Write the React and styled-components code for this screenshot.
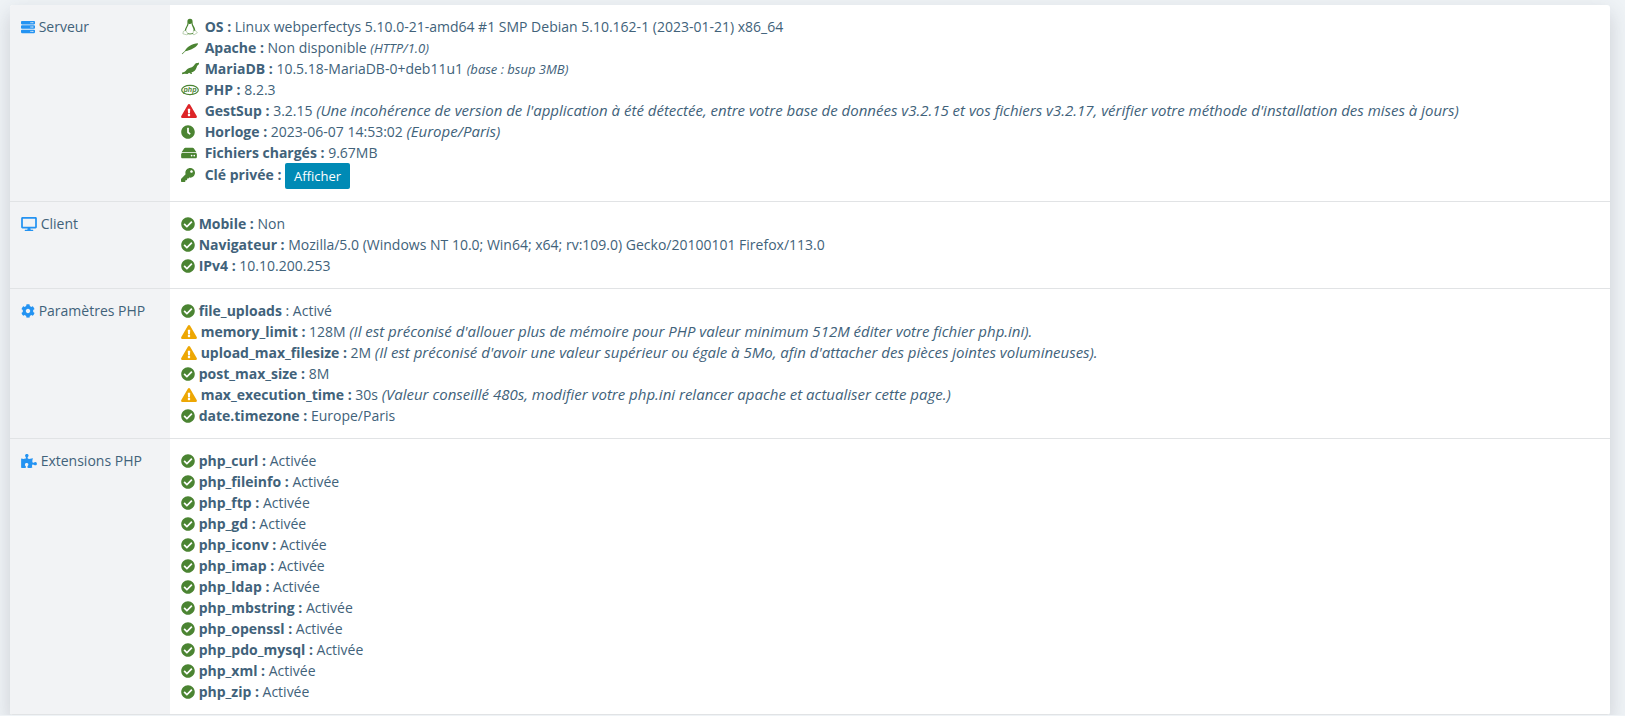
import React from 'react';
import styled, { createGlobalStyle } from 'styled-components';
import {
  FaServer,
  FaDesktop,
  FaCog,
  FaPuzzlePiece,
  FaCheckCircle,
  FaExclamationTriangle,
  FaClock,
  FaHdd,
  FaKey,
} from 'react-icons/fa';

const GlobalStyle = createGlobalStyle`
  body {
    margin: 0;
    background-color: #eff3f6;
    color: #41627a;
    font-family: 'Open Sans', 'Noto Sans', sans-serif;
    font-size: 14px;
    line-height: 21px;
  }
`;

const Page = styled.main`
  padding: 5px 15px 0 10px;
`;

const Card = styled.section`
  background-color: #fff;
  border-radius: 3px;
  overflow: hidden;
  box-shadow: 0 8px 20px rgba(60, 60, 80, 0.2);
`;

const InfoTable = styled.table`
  width: 100%;
  border-collapse: collapse;
`;

const Row = styled.tr`
  border-bottom: 1px solid #e1e3e5;
`;

const Heading = styled.th`
  width: 138px;
  padding: 11px;
  background-color: #f2f3f5;
  font-weight: 400;
  text-align: left;
  vertical-align: top;
  white-space: nowrap;
`;

const Cell = styled.td`
  padding: 11px 11px 12px;
  vertical-align: top;
`;

const List = styled.ul`
  margin: 0;
  padding: 0;
  list-style: none;
`;

const colors = {
  blue: '#2493f2',
  green: '#4b8432',
  red: '#dd2528',
  orange: '#eda704',
};

const Icon = styled.span`
  display: inline-block;
  min-width: ${props => (props.$column ? '20px' : '0')};
  color: ${props => colors[props.$color]};
  line-height: 1;

  svg {
    display: inline-block;
    vertical-align: -2px;
    width: ${props => (props.$wide ? '16px' : '14px')};
    height: 14px;
  }
`;

const Logo = styled.svg`
  && {
    width: 18px;
    height: 18px;
    vertical-align: -4px;
  }
`;

const Note = styled.em`
  font-size: ${props => (props.$small ? '13px' : '15px')};
  line-height: 1;
`;

const ShowButton = styled.button`
  height: 26px;
  padding: 0 9px;
  border: 0;
  border-radius: 2px;
  background-color: #008ab5;
  color: #fff;
  font-family: inherit;
  font-size: 13px;
  line-height: 26px;
  vertical-align: middle;
  cursor: pointer;
`;

const LinuxLogo = () => (
  <Logo viewBox="0 0 18 18">
    <path
      fill="currentColor"
      d="M9 .8C6.800.8 6.300 2.400 6.400 4.200c.1 2-.2 2.800-1.200 4.500-1 1.600-1.400 3-1.300 4.200l1.200.5c-.1-1.700.5-3.300 1.500-4.900.7-1.200 1-2 1-3.100.4.500.8.700 1.400.7s1.100-.3 1.500-.8c.1 1.300.4 2.200 1 3.400.8 1.600 1.300 3 1.100 4.500l1.600-.3c.2-1.800-.5-3.400-1.500-5-.9-1.500-1.100-2.300-1.100-4C11.600 2 11 .8 9 .8z"
    />
    <path fill="none" stroke="currentColor" strokeWidth=".9" d="M6 15.500q3 1 6 0" />
    <path
      fill="#fff"
      stroke="currentColor"
      strokeWidth=".6"
      strokeOpacity=".6"
      d="M4.300 12.200l2.500 3.200c.3 1-.6 1.600-1.600 1.300L1.900 15.800l.4-2.300zM12.500 12.500l2 .3 1.900 1.800-2.600 1.800c-.9.600-1.900.2-1.800-.8z"
    />
  </Logo>
);

const ApacheLogo = () => (
  <Logo viewBox="0 0 18 18" fill="currentColor">
    <path d="M.8 14.800 3.800 11.900C6 8 11 4.300 17 4.200c.3 2.400-4.400 5.200-7.600 6.500-2.200.9-4 1.300-5 1.500L1.300 15.200z" />
  </Logo>
);

const MariaLogo = () => (
  <Logo viewBox="0 0 18 18" fill="currentColor">
    <path d="M18 2.600c-1.300.9-2.800.1-4 1.400-1 1.100-1.400 2.600-3.200 3.200C8.500 7.800 6.600 8.300 5.400 10c-1 1.600-2.400 2.400-4.200 2.600L1 14.300l2.700-.6 2.800.2 1.600-1.100 1.900 1.300 1.200-.4-.8-1.300c2.700-.7 4.400-2.500 5.200-5 .6-1.700 1-2.300 2.300-3.200z" />
  </Logo>
);

const PhpLogo = () => (
  <Logo viewBox="0 0 18 18">
    <ellipse cx="9" cy="9" rx="8.300" ry="4.600" fill="none" stroke="currentColor" strokeWidth="1.200" />
    <text
      x="9"
      y="11"
      textAnchor="middle"
      fill="currentColor"
      fontFamily="Liberation Sans, sans-serif"
      fontSize="7"
      fontStyle="italic"
      fontWeight="700"
    >
      php
    </text>
  </Logo>
);

const sections = [
  {
    title: 'Serveur',
    icon: <FaServer />,
    column: true,
    items: [
      {
        icon: <LinuxLogo />,
        label: 'OS :',
        value: 'Linux webperfectys 5.10.0-21-amd64 #1 SMP Debian 5.10.162-1 (2023-01-21) x86_64',
      },
      { icon: <ApacheLogo />, label: 'Apache :', value: 'Non disponible', small: '(HTTP/1.0)' },
      { icon: <MariaLogo />, label: 'MariaDB :', value: '10.5.18-MariaDB-0+deb11u1', small: '(base : bsup 3MB)' },
      { icon: <PhpLogo />, label: 'PHP :', value: '8.2.3' },
      {
        icon: <FaExclamationTriangle />,
        wide: true,
        color: 'red',
        label: 'GestSup :',
        value: '3.2.15',
        note:
          "(Une incohérence de version de l'application à été détectée, entre votre base de données v3.2.15 et vos fichiers v3.2.17, vérifier votre méthode d'installation des mises à jours)",
      },
      { icon: <FaClock />, label: 'Horloge :', value: '2023-06-07 14:53:02', note: '(Europe/Paris)' },
      { icon: <FaHdd />, wide: true, label: 'Fichiers chargés :', value: '9.67MB' },
      { icon: <FaKey />, label: 'Clé privée :', action: 'Afficher' },
    ],
  },
  {
    title: 'Client',
    icon: <FaDesktop />,
    wide: true,
    items: [
      { label: 'Mobile :', value: 'Non' },
      { label: 'Navigateur :', value: 'Mozilla/5.0 (Windows NT 10.0; Win64; x64; rv:109.0) Gecko/20100101 Firefox/113.0' },
      { label: 'IPv4 :', value: '10.10.200.253' },
    ],
  },
  {
    title: 'Paramètres PHP',
    icon: <FaCog />,
    items: [
      { label: 'file_uploads', value: ': Activé' },
      {
        warning: true,
        label: 'memory_limit :',
        value: '128M',
        note: "(Il est préconisé d'allouer plus de mémoire pour PHP valeur minimum 512M éditer votre fichier php.ini).",
      },
      {
        warning: true,
        label: 'upload_max_filesize :',
        value: '2M',
        note:
          "(Il est préconisé d'avoir une valeur supérieur ou égale à 5Mo, afin d'attacher des pièces jointes volumineuses).",
      },
      { label: 'post_max_size :', value: '8M' },
      {
        warning: true,
        label: 'max_execution_time :',
        value: '30s',
        note: '(Valeur conseillé 480s, modifier votre php.ini relancer apache et actualiser cette page.)',
      },
      { label: 'date.timezone :', value: 'Europe/Paris' },
    ],
  },
  {
    title: 'Extensions PHP',
    icon: <FaPuzzlePiece />,
    wide: true,
    items: [
      'curl',
      'fileinfo',
      'ftp',
      'gd',
      'iconv',
      'imap',
      'ldap',
      'mbstring',
      'openssl',
      'pdo_mysql',
      'xml',
      'zip',
    ].map(name => ({ label: `php_${name} :`, value: 'Activée' })),
  },
];

const Item = ({ item, column }) => {
  const icon = item.icon || (item.warning ? <FaExclamationTriangle /> : <FaCheckCircle />);
  const color = item.color || (item.warning ? 'orange' : 'green');

  return (
    <li>
      <Icon $color={color} $column={column} $wide={item.wide || item.warning}>
        {icon}
      </Icon>{' '}
      <strong>{item.label}</strong> {item.value} {item.note && <Note>{item.note}</Note>}
      {item.small && <Note $small>{item.small}</Note>}
      {item.action && <ShowButton type="button">{item.action}</ShowButton>}
    </li>
  );
};

const App = () => (
  <Page>
    <GlobalStyle />
    <Card>
      <InfoTable>
        <tbody>
          {sections.map(section => (
            <Row key={section.title}>
              <Heading scope="row">
                <Icon $color="blue" $wide={section.wide}>
                  {section.icon}
                </Icon>{' '}
                {section.title}
              </Heading>
              <Cell>
                <List>
                  {section.items.map(item => (
                    <Item key={item.label} item={item} column={section.column} />
                  ))}
                </List>
              </Cell>
            </Row>
          ))}
        </tbody>
      </InfoTable>
    </Card>
  </Page>
);

export default App;
